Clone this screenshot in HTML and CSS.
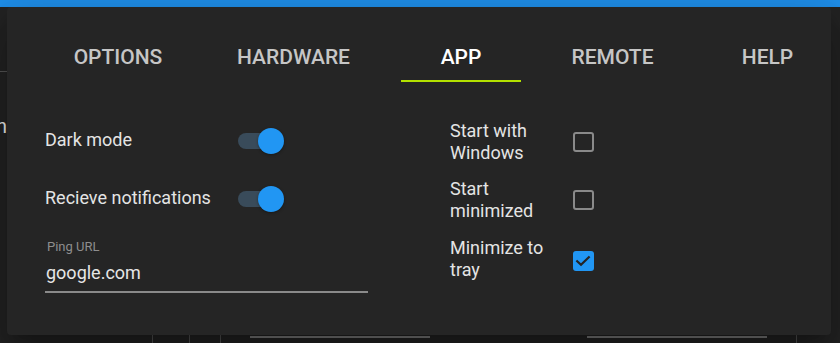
FILE: index.html
```html
<!DOCTYPE html>
<html>
<head>
<meta charset="utf-8">
<link rel="stylesheet" href="styles.css">
</head>
<body>
<div class="app">
  <div class="appbar"></div>
  <div class="page">
    <div class="frag frag-line"></div>
    <div class="frag frag-text">n</div>
    <div class="frag frag-v1"></div>
    <div class="frag frag-v2"></div>
    <div class="frag frag-v3"></div>
    <div class="frag frag-h1"></div>
    <div class="frag frag-h2"></div>
    <div class="frag frag-v4"></div>
  </div>

  <div class="dialog">
    <div class="tabs">
      <div class="tab tab-options">Options</div>
      <div class="tab tab-hardware">Hardware</div>
      <div class="tab tab-app active">App</div>
      <div class="tab tab-remote">Remote</div>
      <div class="tab tab-help">Help</div>
    </div>

    <div class="panel">
      <div class="col-left">
        <div class="switch-row">
          <span class="label switch-label">Dark mode</span>
          <span class="switch"><span class="track"></span><span class="thumb"></span></span>
        </div>
        <div class="switch-row">
          <span class="label switch-label">Recieve notifications</span>
          <span class="switch"><span class="track"></span><span class="thumb"></span></span>
        </div>
        <div class="field">
          <div class="field-label">Ping URL</div>
          <div class="field-input">google.com</div>
        </div>
      </div>

      <div class="col-right">
        <div class="check-row">
          <span class="label check-label">Start with Windows</span>
          <span class="checkbox"></span>
        </div>
        <div class="check-row">
          <span class="label check-label">Start minimized</span>
          <span class="checkbox"></span>
        </div>
        <div class="check-row">
          <span class="label check-label">Minimize to tray</span>
          <span class="checkbox checked">
            <svg viewBox="0 0 20 20" width="20" height="20"><polyline points="4.2,10.2 8,13.8 15.8,6.2" fill="none" stroke="#242424" stroke-width="2.2" stroke-linecap="square"/></svg>
          </span>
        </div>
      </div>
    </div>
  </div>
</div>
</body>
</html>
```

FILE: styles.css
```css
* { box-sizing: border-box; }
html, body { margin: 0; padding: 0; }
body {
  background: #222222;
  font-family: Roboto, "Liberation Sans", sans-serif;
  overflow: hidden;
}
.app {
  position: relative;
  width: 840px;
  height: 343px;
  overflow: hidden;
  background: #222222;
}
.appbar {
  height: 7px;
  background: #1f8fea;
}
.page {
  position: relative;
  height: 336px;
  background: #232323;
}
.frag { position: absolute; }
.frag-line { left: 0; top: 64px; width: 8px; height: 1px; background: #555; }
.frag-text {
  left: -4px; top: 107px;
  color: #f0f0f0; font-size: 20px; line-height: 24px;
}
.frag-v1 { left: 152px; top: 326px; width: 1px; height: 12px; background: #505050; }
.frag-v2 { left: 189px; top: 326px; width: 1px; height: 12px; background: #505050; }
.frag-v3 { left: 220px; top: 326px; width: 1px; height: 12px; background: #505050; }
.frag-v4 { left: 796px; top: 326px; width: 1px; height: 12px; background: #505050; }
.frag-h1 { left: 250px; top: 329px; width: 180px; height: 2px; background: #7a7a7a; }
.frag-h2 { left: 587px; top: 329px; width: 180px; height: 2px; background: #7a7a7a; }

.dialog {
  position: absolute;
  left: 7px;
  top: 7px;
  width: 824px;
  height: 328px;
  background: #252525;
  border-radius: 4px;
  box-shadow: 0 11px 15px -7px rgba(0,0,0,0.25), 0 24px 38px 3px rgba(0,0,0,0.16), 0 9px 46px 8px rgba(0,0,0,0.14);
}

.tabs {
  display: flex;
  padding: 38px 0 0 43px;
}
.tab {
  font-size: 21px;
  font-weight: 500;
  line-height: 24px;
  text-transform: uppercase;
  color: #c6c6c6;
  text-align: center;
  padding-bottom: 11px;
  border-bottom: 2px solid transparent;
}
.tab.active { color: #ffffff; border-bottom-color: #b3e100; }
.tab-options { width: 136px; }
.tab-hardware { width: 215px; }
.tab-app { width: 120px; }
.tab-remote { width: 183px; }
.tab-help { width: 127px; }

.panel {
  display: grid;
  grid-template-columns: 323px 1fr;
  column-gap: 82px;
  padding-left: 38px;
}
.label {
  font-size: 18px;
  line-height: 20px;
  color: #e4e4e4;
}

.col-left {
  display: flex;
  flex-direction: column;
  padding-top: 46px;
}
.switch-row {
  display: flex;
  align-items: flex-start;
  height: 26px;
  margin-bottom: 32px;
}
.switch-row + .switch-row { margin-bottom: 27px; }
.switch-label { width: 193px; margin-top: 2px; }
.switch {
  position: relative;
  width: 46px;
  height: 26px;
}
.track {
  position: absolute;
  left: 0; top: 5px;
  width: 42px; height: 16px;
  border-radius: 8px;
  background: #394b5a;
}
.thumb {
  position: absolute;
  right: 0; top: 0;
  width: 26px; height: 26px;
  border-radius: 50%;
  background: #2196f3;
  box-shadow: 0 1px 3px rgba(0,0,0,0.35);
}

.field {
  border-bottom: 2px solid #8a8a8a;
  padding-bottom: 6px;
}
.field-label {
  font-size: 13px;
  line-height: 16px;
  color: #8e8e8e;
  padding-left: 2px;
  margin-bottom: 6px;
}
.field-input {
  font-size: 18px;
  line-height: 24px;
  color: #e6e6e6;
  padding-left: 1px;
}

.col-right {
  display: flex;
  flex-direction: column;
  padding-top: 38px;
  row-gap: 14px;
}
.check-row {
  display: flex;
  align-items: flex-start;
}
.check-label { width: 123px; padding-right: 10px; line-height: 22px; }
.checkbox {
  width: 21px;
  height: 20px;
  margin-top: 12px;
  border: 2px solid #8a8a8a;
  border-radius: 3px;
}
.check-row:nth-child(2) .checkbox { margin-top: 12px; }
.check-row:nth-child(3) { margin-top: 1px; }
.check-row:nth-child(3) .checkbox { margin-top: 14px; }
.checkbox.checked {
  border: none;
  background: #2196f3;
  display: flex;
}
```
